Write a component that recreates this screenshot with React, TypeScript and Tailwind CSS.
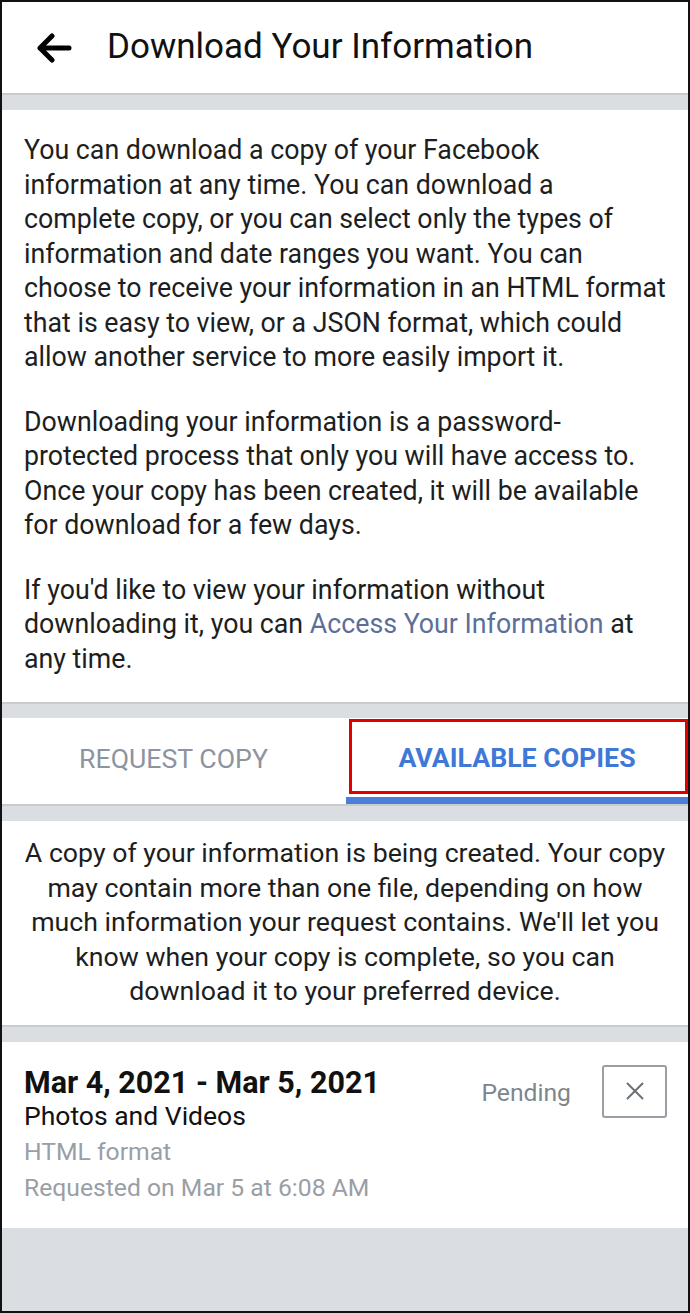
import { X } from 'lucide-react';

const FONT = { fontFamily: 'Roboto, "Liberation Sans", sans-serif' };

function Band({ h = 'h-[17px]' }: { h?: string }) {
  return <div className={`${h} shrink-0 bg-[#dadde1] border-t-2 border-[#c8cbd0]`} />;
}

function BackArrow() {
  return (
    <svg width="36" height="30" viewBox="0 0 36 30" className="ml-[35px]">
      <path
        d="M3 15 H32 M15 3 L3 15 L15 27"
        fill="none"
        stroke="#000"
        strokeWidth="5"
        strokeLinecap="round"
        strokeLinejoin="round"
      />
    </svg>
  );
}

export default function App() {
  return (
    <div className="w-[690px] h-[1313px] bg-[#dadde1] border-2 border-[#111] flex flex-col overflow-hidden text-[#1c1e21]" style={FONT}>
      <header className="h-[91px] bg-white flex items-center shrink-0">
        <BackArrow />
        <h1 className="ml-[34px] text-[35px] leading-none text-[#111] mb-[2px]">Download Your Information</h1>
      </header>
      <Band />

      <section className="bg-white pl-[22px] pr-[20px] pt-[23px] pb-[26px] text-[26.75px] leading-[34.5px] flex flex-col gap-[30px] shrink-0">
        <p>
          You can download a copy of your Facebook information at any time. You can download a complete copy, or you can select only the types of information and date ranges you want. You can choose to receive your information in an HTML format that is easy to view, or a JSON format, which could allow another service to more easily import it.
        </p>
        <p>
          Downloading your information is a password-protected process that only you will have access to. Once your copy has been created, it will be available for download for a few days.
        </p>
        <p>
          If you'd like to view your information without downloading it, you can{' '}
          <span className="text-[#5b6f99]">Access Your Information</span> at any time.
        </p>
      </section>
      <Band h="h-[16px]" />

      <nav className="bg-white h-[86px] grid grid-cols-2 shrink-0">
        <div className="flex items-center justify-center text-[26.7px] text-[#8d949e] pb-[4px]">REQUEST COPY</div>
        <div className="relative flex items-center justify-center border-b-[7px] border-[#4a7fd8] ml-[1px]">
          <span className="text-[26.7px] font-bold text-[#3f78d6] mt-[2px]">AVAILABLE COPIES</span>
          <div className="absolute left-[3px] right-0 top-[1px] bottom-[3px] border-[3px] border-[#e00000] pointer-events-none" />
        </div>
      </nav>
      <Band />

      <section className="bg-white px-[20px] pt-[15px] pb-[16px] text-[26.7px] leading-[34.5px] text-center shrink-0">
        A copy of your information is being created. Your copy may contain more than one file, depending on how much information your request contains. We'll let you know when your copy is complete, so you can download it to your preferred device.
      </section>
      <Band />

      <section className="bg-white h-[186px] pl-[22px] pt-[24px] flex justify-between shrink-0">
        <div className="flex flex-col">
          <div className="text-[30.5px] font-bold leading-[34px] text-[#111]">Mar 4, 2021 - Mar 5, 2021</div>
          <div className="text-[26.5px] leading-[33px] -mt-[1px] text-[#111]">Photos and Videos</div>
          <div className="text-[24.7px] leading-[35px] text-[#9a9ea5] mt-[2px]">HTML format</div>
          <div className="text-[24.7px] leading-[35px] text-[#9a9ea5] mt-[1px]">Requested on Mar 5 at 6:08 AM</div>
        </div>
        <div className="flex items-start gap-[31px] -mt-[1px] mr-[21px]">
          <span className="text-[24.7px] leading-[29px] text-[#7f858d] mt-[13px]">Pending</span>
          <button className="w-[65px] h-[53px] border-2 border-[#9a9fa6] rounded-[3px] flex items-center justify-center">
            <X className="w-[30px] h-[30px] text-[#6b7078]" strokeWidth={1.5} />
          </button>
        </div>
      </section>
      <div className="flex-1 bg-[#dadde1]" />
    </div>
  );
}
